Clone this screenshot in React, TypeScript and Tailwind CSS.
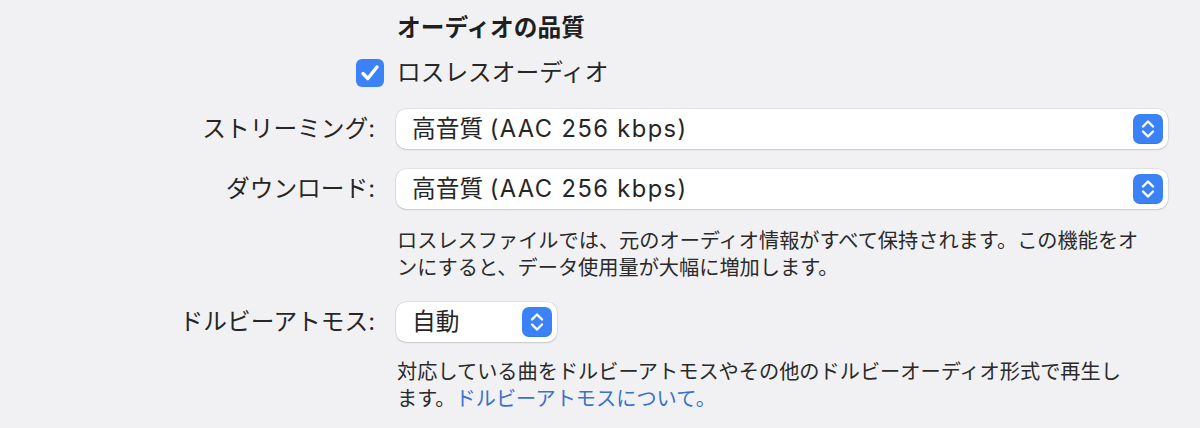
const FONT = "font-['Inter','Noto_Sans_CJK_JP',sans-serif]";

function Stepper() {
  return (
    <div className="flex h-[30px] w-[30px] items-center justify-center rounded-[7px] bg-[#3b82f6] shadow-[inset_0_-1px_0_rgba(0,0,0,0.08)]">
      <svg width="18" height="24" viewBox="0 0 18 24" fill="none">
        <path d="M4 9.5 9 4.5l5 5" stroke="white" strokeWidth="2.4" strokeLinecap="round" strokeLinejoin="round" />
        <path d="M4 14.5 9 19.5l5-5" stroke="white" strokeWidth="2.4" strokeLinecap="round" strokeLinejoin="round" />
      </svg>
    </div>
  );
}

function Popup({ value, latin, width }: { value: string; latin?: string; width: string }) {
  return (
    <div
      className={`flex h-[40px] ${width} items-center justify-between rounded-[10px] bg-white pl-[16px] pr-[5px] shadow-[0_0_0_0.5px_rgba(0,0,0,0.12),0_1px_2px_rgba(0,0,0,0.12)]`}
    >
      <span className="text-[23.7px] leading-none text-[#262626]">
        {value}
        {latin ? <span className="tracking-[1.4px]">{latin}</span> : null}
      </span>
      <Stepper />
    </div>
  );
}

function Row({ label, children, className }: { label: string; children: React.ReactNode; className?: string }) {
  return (
    <div className={`flex items-center ${className ?? ""}`}>
      <div className="w-[376px] pr-[1px] text-right text-[23.7px] leading-none text-[#262626]">{label}</div>
      <div className="ml-[20px]">{children}</div>
    </div>
  );
}

export default function App() {
  return (
    <div className={`h-[428px] w-[1200px] overflow-hidden bg-[#f1f1f3] ${FONT}`}>
      <div className="flex flex-col">
        <div className="ml-[397px] mt-[12px] h-[32px] text-[23.7px] font-bold leading-[32px] text-[#1f1f1f]">
          オーディオの品質
        </div>

        <div className="mt-[13px] flex h-[32px] items-center">
          <div className="ml-[356px] flex h-[28px] w-[28px] items-center justify-center rounded-[6px] bg-[#3b82f6]">
            <svg width="24" height="24" viewBox="0 0 24 24" fill="none">
              <path d="M5 12.5 9.8 17.5 19 6" stroke="white" strokeWidth="3.4" strokeLinecap="round" strokeLinejoin="round" />
            </svg>
          </div>
          <span className="ml-[13px] text-[23.7px] leading-none text-[#262626]">ロスレスオーディオ</span>
        </div>

        <Row label="ストリーミング:" className="mt-[20px]">
          <Popup value="高音質 " latin="(AAC 256 kbps)" width="w-[772px]" />
        </Row>

        <Row label="ダウンロード:" className="mt-[20px]">
          <Popup value="高音質 " latin="(AAC 256 kbps)" width="w-[772px]" />
        </Row>

        <p className="ml-[397px] mt-[18px] whitespace-nowrap text-[20.2px] leading-[27px] text-[#2a2a2a]">
          ロスレスファイルでは、元のオーディオ情報がすべて保持されます。この機能をオ
          <br />
          ンにすると、データ使用量が大幅に増加します。
        </p>

        <Row label="ドルビーアトモス:" className="mt-[21px]">
          <Popup value="自動" width="w-[161px]" />
        </Row>

        <p className="ml-[397px] mt-[16px] whitespace-nowrap text-[20.2px] leading-[27px] text-[#2a2a2a]">
          対応している曲をドルビーアトモスやその他のドルビーオーディオ形式で再生し
          <br />
          ます。<span className="text-[#3a72c9]">ドルビーアトモスについて。</span>
        </p>
      </div>
    </div>
  );
}
